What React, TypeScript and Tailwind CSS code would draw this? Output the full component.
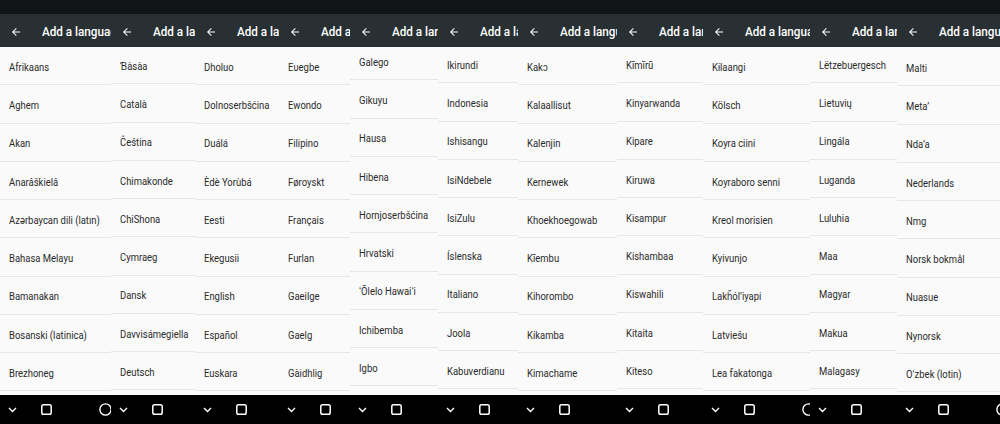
import React from "react";

type Strip = { w: string; shift: string; items: string[] };

// each column is a cropped phone screen: width class + how far the list is scrolled
const strips: Strip[] = [
  {
    w: "w-[111px]",
    shift: "mt-0",
    items: ["Afrikaans", "Aghem", "Akan", "Anarâškielâ", "Azərbaycan dili (latın)", "Bahasa Melayu", "Bamanakan", "Bosanski (latinica)", "Brezhoneg"],
  },
  {
    w: "w-[84px]",
    shift: "-mt-[1px]",
    items: ["Ɓàsàa", "Català", "Čeština", "Chimakonde", "ChiShona", "Cymraeg", "Dansk", "Davvisámegiella", "Deutsch"],
  },
  {
    w: "w-[84px]",
    shift: "mt-0",
    items: ["Dholuo", "Dolnoserbšćina", "Duálá", "Èdè Yorùbá", "Eesti", "Ekegusii", "English", "Español", "Euskara"],
  },
  {
    w: "w-[71px]",
    shift: "mt-0",
    items: ["Eʋegbe", "Ewondo", "Filipino", "Føroyskt", "Français", "Furlan", "Gaeilge", "Gaelg", "Gàidhlig"],
  },
  {
    w: "w-[88px]",
    shift: "-mt-[5px]",
    items: ["Galego", "Gikuyu", "Hausa", "Hibena", "Hornjoserbšćina", "Hrvatski", "ʻŌlelo Hawaiʻi", "Ichibemba", "Igbo"],
  },
  {
    w: "w-[80px]",
    shift: "-mt-[2px]",
    items: ["Ikirundi", "Indonesia", "Ishisangu", "IsiNdebele", "IsiZulu", "Íslenska", "Italiano", "Joola", "Kabuverdianu"],
  },
  {
    w: "w-[99px]",
    shift: "mt-0",
    items: ["Kakɔ", "Kalaallisut", "Kalenjin", "Kernewek", "Khoekhoegowab", "Kĩembu", "Kihorombo", "Kikamba", "Kimachame"],
  },
  {
    w: "w-[86px]",
    shift: "-mt-[2px]",
    items: ["Kĩmĩrũ", "Kinyarwanda", "Kipare", "Kiruwa", "Kisampur", "Kishambaa", "Kiswahili", "Kitaita", "Kiteso"],
  },
  {
    w: "w-[107px]",
    shift: "mt-0",
    items: ["Kɨlaangi", "Kölsch", "Koyra ciini", "Koyraboro senni", "Kreol morisien", "Kyivunjo", "Lakȟólʼiyapi", "Latviešu", "Lea fakatonga"],
  },
  {
    w: "w-[87px]",
    shift: "-mt-[2px]",
    items: ["Lëtzebuergesch", "Lietuvių", "Lingála", "Luganda", "Luluhia", "Maa", "Magyar", "Makua", "Malagasy"],
  },
  {
    w: "w-[103px]",
    shift: "mt-[1px]",
    items: ["Malti", "Metaʼ", "Ndaʼa", "Nederlands", "Nmg", "Norsk bokmål", "Nuasue", "Nynorsk", "Oʻzbek (lotin)"],
  },
];

const BackArrow = () => (
  <svg width="12" height="12" viewBox="0 0 24 24" className="shrink-0 ml-[10px]">
    <path fill="#fff" d="M20 11H7.83l5.59-5.59L12 4l-8 8 8 8 1.41-1.41L7.83 13H20v-2z" />
  </svg>
);

const NavBar = () => (
  <div className="h-[29px] shrink-0 bg-black flex items-center">
    <svg width="9" height="6" viewBox="0 0 9 6" className="shrink-0 ml-[8px]">
      <path d="M1 1l3.5 3.5L8 1" fill="none" stroke="#fff" strokeWidth="1.4" />
    </svg>
    <svg width="11" height="11" viewBox="0 0 11 11" className="shrink-0 ml-[24px]">
      <rect x="0.8" y="0.8" width="9.4" height="9.4" rx="1.8" fill="none" stroke="#fff" strokeWidth="1.5" />
    </svg>
    <svg width="13" height="13" viewBox="0 0 13 13" className="shrink-0 ml-[47px]">
      <circle cx="6.5" cy="6.5" r="5.6" fill="none" stroke="#fff" strokeWidth="1.4" />
    </svg>
  </div>
);

const Screen = ({ strip }: { strip: Strip }) => (
  <div className={`${strip.w} h-full shrink-0 flex flex-col overflow-hidden`}>
    <div className="h-[14px] shrink-0 bg-[#121518]" />
    <div className="h-[33px] shrink-0 bg-[#283034] flex items-center pt-[2px] overflow-hidden relative z-10">
      <BackArrow />
      <span className="ml-[20px] inline-block origin-left scale-x-[0.9] whitespace-nowrap text-[13px] font-medium text-white">
        Add a language
      </span>
    </div>
    <div className="flex-1 overflow-hidden bg-[#fafafa]">
      <div className={`${strip.shift} flex flex-col`}>
        {strip.items.map((name) => (
          <div
            key={name}
            className="h-[38.25px] shrink-0 flex items-center pt-[5px] pl-[9px] border-b border-[#e6e6e6]"
          >
            <span className="inline-block origin-left scale-x-[0.86] whitespace-nowrap text-[11px] text-[#2a2a2a]">
              {name}
            </span>
          </div>
        ))}
      </div>
    </div>
    <NavBar />
  </div>
);

export default function App() {
  return (
    <div className="w-[1000px] h-[424px] flex overflow-hidden bg-black font-['Roboto',sans-serif]">
      {strips.map((s, i) => (
        <Screen key={i} strip={s} />
      ))}
    </div>
  );
}
